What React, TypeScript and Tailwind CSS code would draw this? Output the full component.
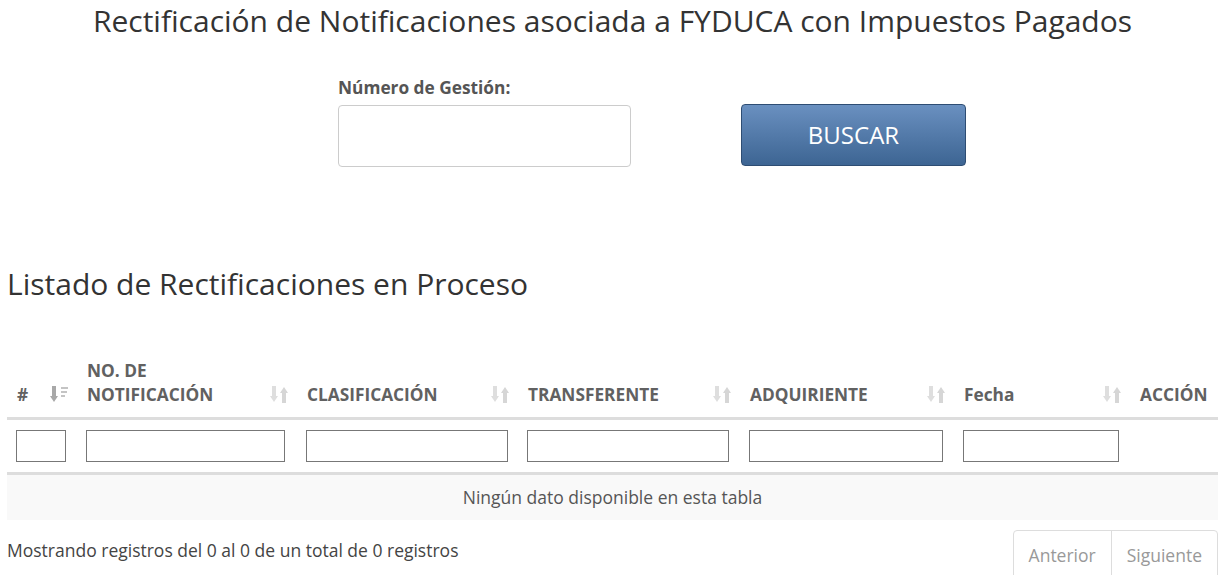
import React from 'react';

const font = { fontFamily: '"Open Sans", "Liberation Sans", sans-serif' };

// sort icon, first column shows the active (desc) variant
function SortIcon({ active }: { active?: boolean }) {
  if (active) {
    return (
      <svg width="18" height="17" viewBox="0 0 18 17" className="shrink-0">
        <rect x="2" y="0" width="4" height="11" fill="#a8a8a8" />
        <polygon points="0,10 8,10 4,16" fill="#a8a8a8" />
        <rect x="11" y="1" width="7" height="2" fill="#c4c4c4" />
        <rect x="11" y="5" width="6" height="2" fill="#c4c4c4" />
        <rect x="11" y="9" width="4" height="2" fill="#c4c4c4" />
      </svg>
    );
  }
  return (
    <svg width="18" height="17" viewBox="0 0 18 17" className="shrink-0">
      <rect x="2" y="0" width="4" height="11" fill="#dedede" />
      <polygon points="0,10 8,10 4,16" fill="#dedede" />
      <rect x="12" y="6" width="4" height="11" fill="#d6d6d6" />
      <polygon points="10,7 18,7 14,1" fill="#d6d6d6" />
    </svg>
  );
}

const columns = [
  { label: ['#'], width: 'w-[70px]', active: true, input: 'w-[50px]' },
  { label: ['NO. DE', 'NOTIFICACIÓN'], width: 'w-[220px]', input: 'w-[199px]' },
  { label: ['CLASIFICACIÓN'], width: 'w-[221px]', input: 'w-[202px]' },
  { label: ['TRANSFERENTE'], width: 'w-[222px]', input: 'w-[202px]' },
  { label: ['ADQUIRIENTE'], width: 'w-[214px]', input: 'w-[194px]' },
  { label: ['Fecha'], width: 'w-[176px]', input: 'w-[156px]' },
];

export default function App() {
  return (
    <div className="min-h-screen bg-white text-[#333]" style={font}>
      <h2 className="pt-[1px] text-center text-[30px] leading-[40px] text-[#333]">
        Rectificación de Notificaciones asociada a FYDUCA con Impuestos Pagados
      </h2>

      {/* search form */}
      <div className="mt-[36px] flex items-end pl-[338px]">
        <div className="flex flex-col">
          <label className="text-[17.3px] font-bold leading-[22px] text-[#555]">Número de Gestión:</label>
          <input className="mt-[6px] h-[62px] w-[293px] rounded border border-[#ccc] bg-white" />
        </div>
        <button className="mb-[1px] ml-[110px] h-[62px] w-[225px] rounded border border-[#2e4d73] bg-gradient-to-b from-[#6a90c0] to-[#3d6593] text-[24px] text-white">
          BUSCAR
        </button>
      </div>

      <h3 className="mt-[97px] pl-[7px] text-[30px] leading-[40px] text-[#333]">
        Listado de Rectificaciones en Proceso
      </h3>

      <div className="px-[7px] pt-[55px]">
        <table className="w-[1211px] table-fixed border-collapse">
          <thead>
            <tr className="border-b-[3px] border-[#ddd]">
              {columns.map((c, i) => (
                <th key={i} className={`${c.width} pb-[10px] pl-[10px] pr-[9px] text-left align-bottom`}>
                  <div className="flex items-end justify-between">
                    <span className="text-[17.3px] font-bold leading-[24px] text-[#616161]">
                      {c.label.map((l, j) => (
                        <div key={j}>{l}</div>
                      ))}
                    </span>
                    <span className="mb-[4px]">
                      <SortIcon active={c.active} />
                    </span>
                  </div>
                </th>
              ))}
              <th className="w-[88px] pb-[10px] pl-[10px] text-left align-bottom text-[17.3px] font-bold leading-[24px] text-[#616161]">
                ACCIÓN
              </th>
            </tr>
          </thead>
          <tbody>
            <tr className="border-b-[3px] border-[#ddd]">
              {columns.map((c, i) => (
                <td key={i} className="h-[55px] pl-[9px] align-middle">
                  <input className={`${c.input} h-[32px] border border-[#777] bg-white`} />
                </td>
              ))}
              <td />
            </tr>
            <tr className="bg-[#f9f9f9]">
              <td colSpan={7} className="h-[46px] text-center text-[17.5px] text-[#555]">
                Ningún dato disponible en esta tabla
              </td>
            </tr>
          </tbody>
        </table>

        <div className="mt-[10px] flex items-start justify-between">
          <div className="pt-[7px] text-[17.5px] text-[#444]">
            Mostrando registros del 0 al 0 de un total de 0 registros
          </div>
          <div className="flex rounded-t border border-[#ddd] text-[17.5px] text-[#999]">
            <span className="px-[15px] py-[11px]">Anterior</span>
            <span className="border-l border-[#ddd] px-[15px] py-[11px]">Siguiente</span>
          </div>
        </div>
      </div>
    </div>
  );
}
